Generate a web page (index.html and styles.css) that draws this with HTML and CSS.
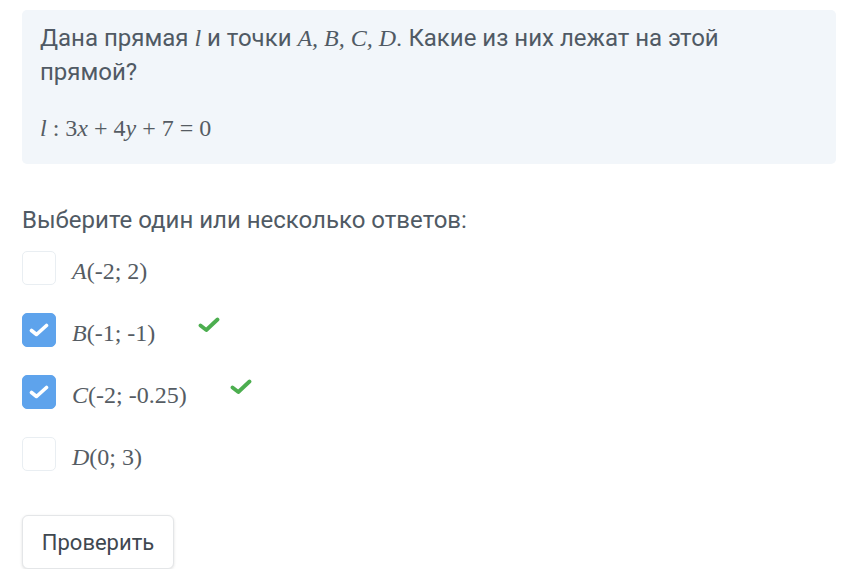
FILE: index.html
```html
<!DOCTYPE html>
<html lang="ru">
<head>
<meta charset="utf-8">
<link rel="stylesheet" href="styles.css">
</head>
<body>
<div class="page">
  <div class="question">
    <p class="q-text">Дана прямая <span class="m">l</span> и точки <span class="m">A, B, C, D</span>. Какие из них лежат на этой прямой?</p>
    <p class="formula"><span class="mi">l</span> : 3<span class="mi">x</span> + 4<span class="mi">y</span> + 7 = 0</p>
  </div>
  <div class="prompt">Выберите один или несколько ответов:</div>
  <ul class="answers">
    <li class="answer">
      <span class="box"></span>
      <span class="label"><span class="mi">A</span>(-2; 2)</span>
    </li>
    <li class="answer">
      <span class="box checked"><svg viewBox="0 0 20 14" width="20" height="14"><path d="M2.5 7.5 L7.5 11.5 L17.5 2.5" fill="none" stroke="#fff" stroke-width="3.6" stroke-linecap="round" stroke-linejoin="round"/></svg></span>
      <span class="label"><span class="mi">B</span>(-1; -1)</span>
      <svg class="ok" viewBox="0 0 22 16" width="22" height="16"><path d="M2.5 8.5 L8.3 13 L19.5 2.5" fill="none" stroke="#4cae4f" stroke-width="3.8" stroke-linecap="round" stroke-linejoin="round"/></svg>
    </li>
    <li class="answer">
      <span class="box checked"><svg viewBox="0 0 20 14" width="20" height="14"><path d="M2.5 7.5 L7.5 11.5 L17.5 2.5" fill="none" stroke="#fff" stroke-width="3.6" stroke-linecap="round" stroke-linejoin="round"/></svg></span>
      <span class="label"><span class="mi">C</span>(-2; -0.25)</span>
      <svg class="ok" viewBox="0 0 22 16" width="22" height="16"><path d="M2.5 8.5 L8.3 13 L19.5 2.5" fill="none" stroke="#4cae4f" stroke-width="3.8" stroke-linecap="round" stroke-linejoin="round"/></svg>
    </li>
    <li class="answer">
      <span class="box"></span>
      <span class="label"><span class="mi">D</span>(0; 3)</span>
    </li>
  </ul>
  <button class="check-btn">Проверить</button>
</div>
</body>
</html>
```
FILE: styles.css
```css
* { box-sizing: border-box; }
html, body { margin: 0; padding: 0; background: #fff; }
body {
  font-family: Roboto, "Noto Sans", "Liberation Sans", sans-serif;
  color: #505a64;
  font-size: 24px;
}
.page { padding: 10px 7px 0 22px; }
.question {
  background: #f2f6fa;
  border-radius: 5px;
  padding: 11px 90px 19px 18px;
}
.q-text { margin: 0; line-height: 34px; }
.m, .mi {
  font-family: "Liberation Serif", "DejaVu Serif", serif;
  font-style: italic;
}
.formula {
  margin: 22px 0 0 0;
  line-height: 34px;
  font-family: "Liberation Serif", "DejaVu Serif", serif;
  color: #555c63;
}
.prompt {
  margin-top: 39px;
  line-height: 34px;
}
.answers {
  list-style: none;
  margin: 14px 0 0 0;
  padding: 0;
  display: flex;
  flex-direction: column;
  gap: 28px;
}
.answer {
  display: flex;
  align-items: center;
  height: 34px;
}
.box {
  width: 34px;
  height: 34px;
  border: 1px solid #e9eef2;
  border-radius: 5px;
  background: #fff;
  display: flex;
  align-items: center;
  justify-content: center;
  flex: none;
}
.box.checked {
  background: #5ea3ec;
  border-color: #5ea3ec;
}
.label {
  margin-left: 16px;
  font-family: "Liberation Serif", "DejaVu Serif", serif;
  color: #555c63;
  font-size: 24px;
  position: relative;
  top: 3px;
}
.ok {
  margin-left: 43px;
  position: relative;
  top: -5px;
}
.check-btn {
  margin-top: 44px;
  width: 152px;
  height: 54px;
  background: #fff;
  border: 1px solid #e4e6e8;
  border-radius: 6px;
  box-shadow: 0 1px 3px rgba(0,0,0,0.12);
  font-family: Roboto, "Noto Sans", "Liberation Sans", sans-serif;
  font-size: 22px;
  color: #3f4850;
  padding: 0;
}
```
